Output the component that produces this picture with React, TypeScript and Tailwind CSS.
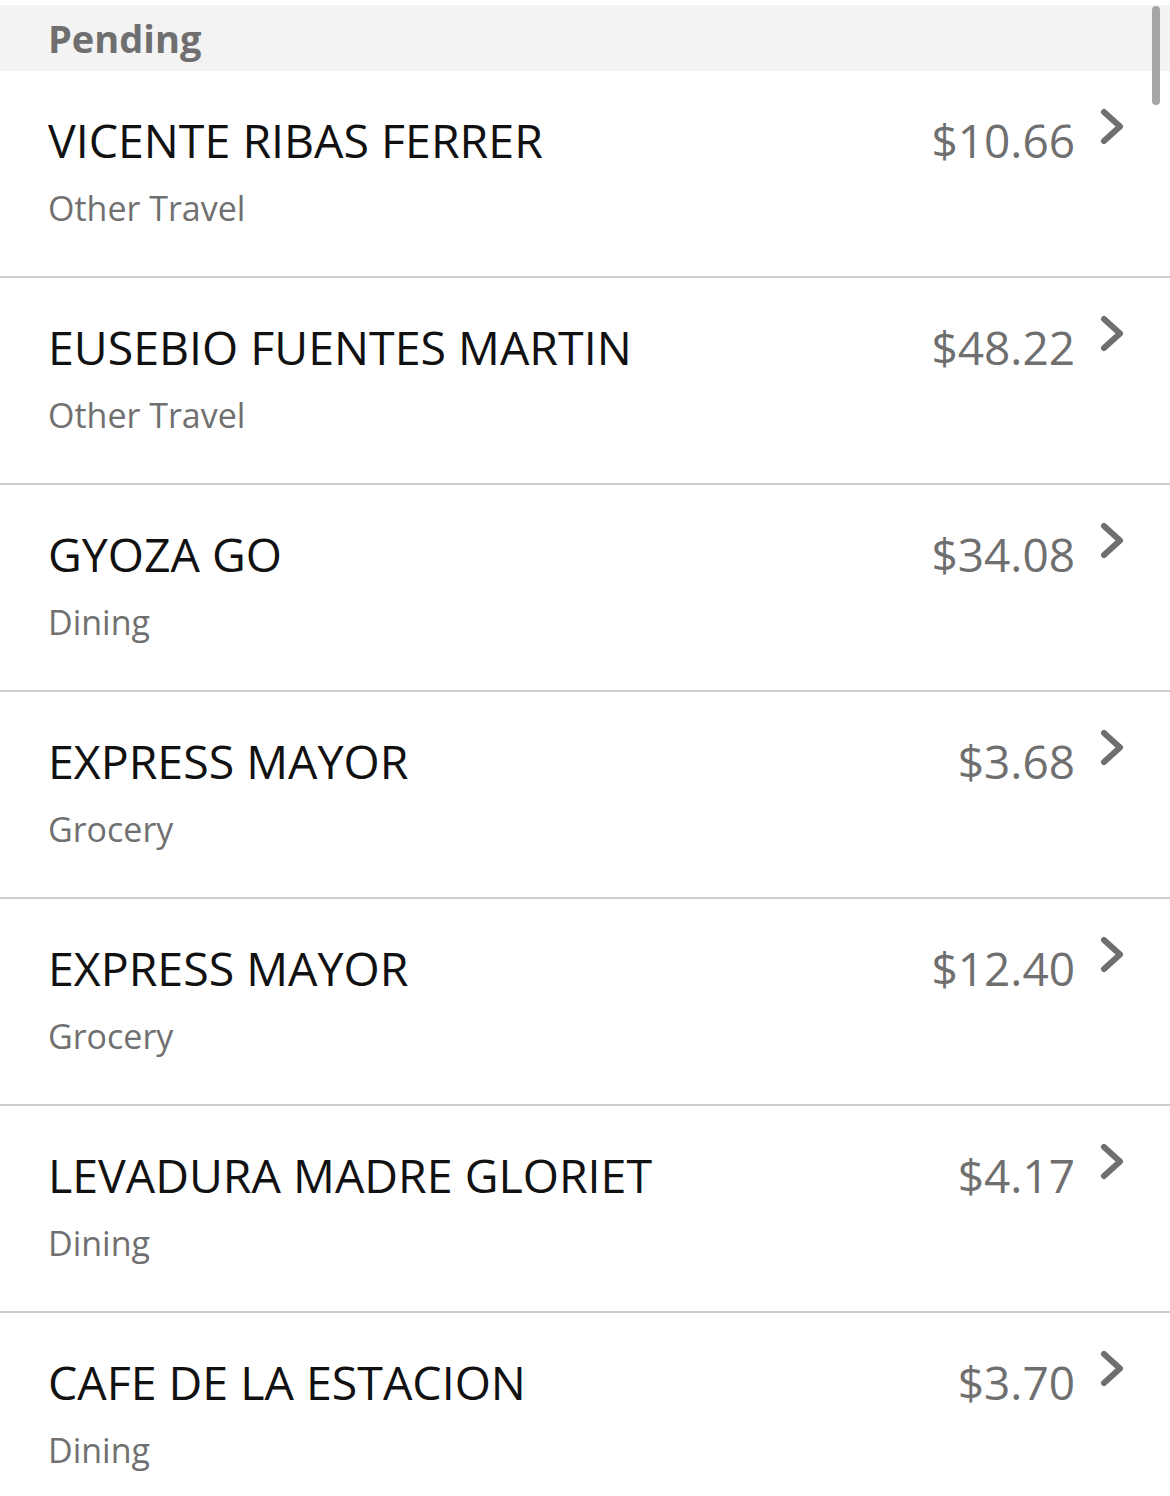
import React from "react";

const rows = [
  { name: "VICENTE RIBAS FERRER", cat: "Other Travel", amt: "$10.66" },
  { name: "EUSEBIO FUENTES MARTIN", cat: "Other Travel", amt: "$48.22" },
  { name: "GYOZA GO", cat: "Dining", amt: "$34.08" },
  { name: "EXPRESS MAYOR", cat: "Grocery", amt: "$3.68" },
  { name: "EXPRESS MAYOR", cat: "Grocery", amt: "$12.40" },
  { name: "LEVADURA MADRE GLORIET", cat: "Dining", amt: "$4.17" },
  { name: "CAFE DE LA ESTACION", cat: "Dining", amt: "$3.70" },
];

function Chevron() {
  return (
    <svg width="28" height="40" viewBox="0 0 28 40" className="mt-[-6px] shrink-0">
      <path d="M5 6 L21 20.5 L5 35" fill="none" stroke="#6f6f6f" strokeWidth="6" strokeLinecap="round" strokeLinejoin="round" />
    </svg>
  );
}

export default function App() {
  return (
    <div className="relative h-[1496px] w-[1170px] overflow-hidden bg-white font-['Open_Sans',sans-serif]">
      <div className="mt-[5px] flex h-[66px] items-center bg-[#f3f3f3] pl-[48px]">
        <span className="text-[38px] font-bold leading-none text-[#6f6f6f]">Pending</span>
      </div>
      {rows.map((r, i) => (
        <div key={i} className="flex h-[207px] border-b-2 border-[#cdcdcd] pl-[48px] pr-[43px] pt-[41px]">
          <div className="flex flex-1 flex-col">
            <div className="text-[46.5px] leading-[56px] text-[#111111]">{r.name}</div>
            <div className="mt-[17px] text-[34px] leading-[46px] text-[#707070]">{r.cat}</div>
          </div>
          <div className="flex items-start gap-[24px]">
            <div className="text-[46px] leading-[56px] text-[#6f6f6f]">{r.amt}</div>
            <Chevron />
          </div>
        </div>
      ))}
      <div className="absolute right-[10px] top-[6px] h-[99px] w-[8px] rounded-full bg-[#a6a6a6]" />
    </div>
  );
}
